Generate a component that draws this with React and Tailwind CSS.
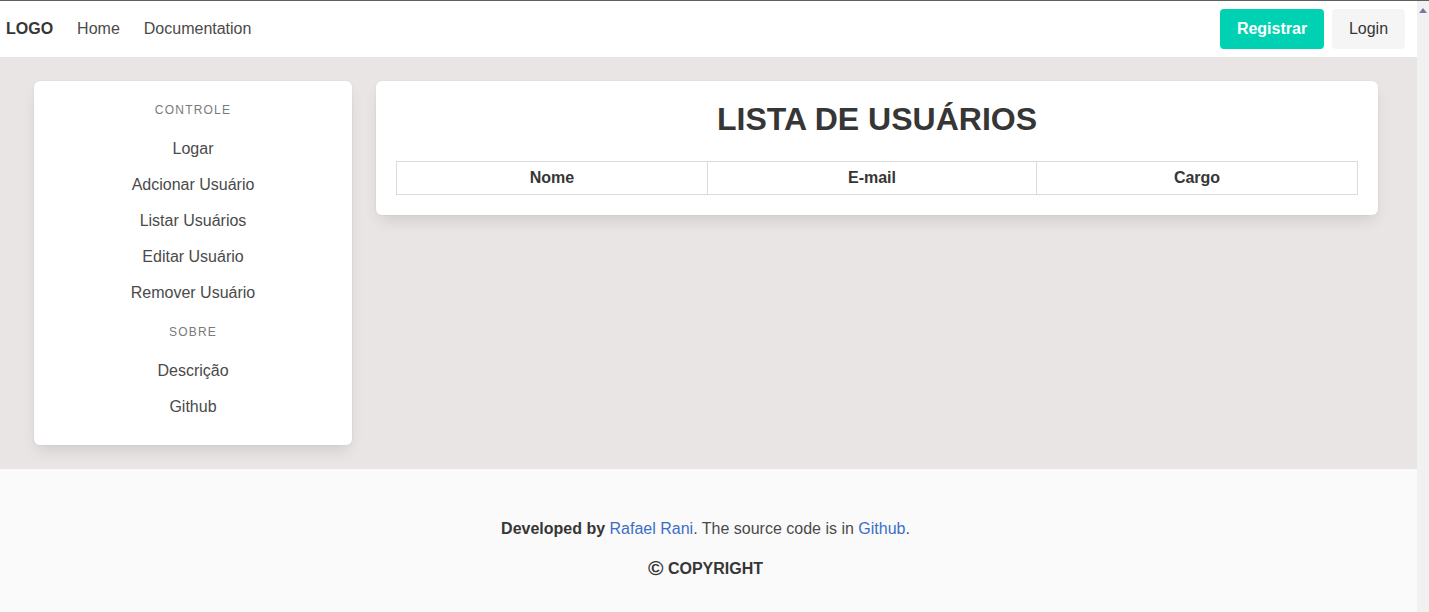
import React from "react";

const font = { fontFamily: '"Liberation Sans", Arial, sans-serif' };

function MenuLabel({ children, first }) {
  return (
    <p className={`text-[12px] leading-[18px] tracking-[0.1em] uppercase text-[#7a7a7a] text-center mb-[12px] ${first ? "" : "mt-[12px]"}`}>
      {children}
    </p>
  );
}

function MenuItem({ children }) {
  return (
    <li className="px-[12px] py-[8px] text-[16px] leading-[20px] text-[#4a4a4a] text-center">
      {children}
    </li>
  );
}

export default function App() {
  return (
    <div style={font} className="w-[1429px] h-[612px] overflow-hidden flex flex-col bg-white">
      <div className="h-px w-full bg-[#5f5f5f] shrink-0" />
      <div className="flex flex-1 min-h-0">
        <div className="flex-1 min-w-0 flex flex-col">
          {/* Navbar */}
          <nav className="h-[56px] shrink-0 flex items-center bg-white text-[16px] text-[#4a4a4a]">
            <div className="flex items-center pl-[6px]">
              <span className="font-bold text-[#363636]">LOGO</span>
              <span className="ml-[24px]">Home</span>
              <span className="ml-[24px]">Documentation</span>
            </div>
            <div className="ml-auto flex items-center gap-[8px] pr-[12px]">
              <button className="h-[40px] w-[104px] rounded-[4px] bg-[#00d1b2] text-white font-bold text-[16px]">
                Registrar
              </button>
              <button className="h-[40px] w-[73px] rounded-[4px] bg-[#f5f5f5] text-[#363636] text-[16px]">
                Login
              </button>
            </div>
          </nav>

          {/* Main */}
          <main className="bg-[#e8e5e4] pl-[34px] pr-[39px] py-[24px] flex gap-[24px] items-start shrink-0">
            <aside className="w-[318px] shrink-0 bg-white rounded-[6px] shadow-[0_8px_16px_-4px_rgba(10,10,10,0.12),0_0_0_1px_rgba(10,10,10,0.02)] p-[20px]">
              <MenuLabel first>Controle</MenuLabel>
              <ul>
                <MenuItem>Logar</MenuItem>
                <MenuItem>Adcionar Usuário</MenuItem>
                <MenuItem>Listar Usuários</MenuItem>
                <MenuItem>Editar Usuário</MenuItem>
                <MenuItem>Remover Usuário</MenuItem>
              </ul>
              <MenuLabel>Sobre</MenuLabel>
              <ul>
                <MenuItem>Descrição</MenuItem>
                <MenuItem>Github</MenuItem>
              </ul>
            </aside>

            <section className="flex-1 min-w-0 bg-white rounded-[6px] shadow-[0_8px_16px_-4px_rgba(10,10,10,0.12),0_0_0_1px_rgba(10,10,10,0.02)] p-[20px]">
              <h1 className="text-[32px] leading-[36px] font-bold text-[#363636] text-center mb-[24px]">
                LISTA DE USUÁRIOS
              </h1>
              <table className="w-full border-collapse text-[16px] text-[#363636]">
                <thead>
                  <tr>
                    <th className="w-[311px] border border-[#dbdbdb] px-[8px] py-[4px] leading-[24px] font-bold text-center">Nome</th>
                    <th className="w-[329px] border border-[#dbdbdb] px-[8px] py-[4px] leading-[24px] font-bold text-center">E-mail</th>
                    <th className="border border-[#dbdbdb] px-[8px] py-[4px] leading-[24px] font-bold text-center">Cargo</th>
                  </tr>
                </thead>
              </table>
            </section>
          </main>

          {/* Footer */}
          <footer className="flex-1 bg-[#fafafa] pt-[48px] pl-[24px] pr-[30px] text-[16px] text-[#4a4a4a] text-center">
            <p className="leading-[24px] mb-[16px]">
              <strong className="text-[#363636] font-bold">Developed by</strong>{" "}
              <a className="text-[#3a6fc6]">Rafael Rani</a>. The source code is in{" "}
              <a className="text-[#3a6fc6]">Github</a>.
            </p>
            <p className="h-[24px] leading-[24px] font-bold text-[#363636]">
              <span className="text-[21px] leading-none align-[-1px]">©</span> COPYRIGHT
            </p>
          </footer>
        </div>

        {/* Scrollbar */}
        <div className="w-[12px] shrink-0 bg-[#f1f1f1] flex flex-col items-center pt-[7px]">
          <svg width="8" height="5" viewBox="0 0 8 5">
            <polygon points="4,0 8,5 0,5" fill="#7878a8" />
          </svg>
        </div>
      </div>
    </div>
  );
}
